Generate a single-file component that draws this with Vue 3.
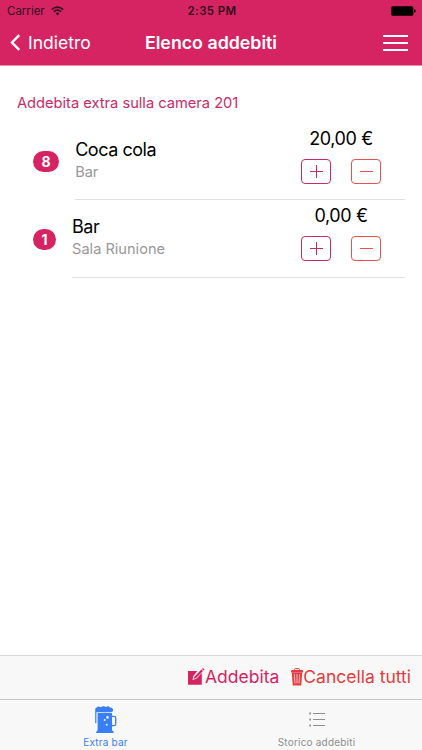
<script setup>
import { ref } from 'vue';

const room = ref(201);

const items = ref([
  { qty: 8, name: 'Coca cola', place: 'Bar', price: '20,00 €' },
  { qty: 1, name: 'Bar', place: 'Sala Riunione', price: '0,00 €' },
]);

const tab = ref('extra');

const add = (item) => {
  item.qty++;
};

const remove = (item) => {
  if (item.qty > 0) {
    item.qty--;
  }
};
</script>

<template>
  <div class="screen">
    <header>
      <div class="status">
        <div class="carrier">
          <span>Carrier</span>
          <svg width="13" height="10" viewBox="0 0 13 10" fill="none" stroke="#30101c" stroke-width="1.6">
            <path d="M0.8 3.7Q6.5 -1.5 12.2 3.7" />
            <path d="M2.9 5.8Q6.5 2.5 10.1 5.8" />
            <path d="M4.6 7.3Q6.5 5.6 8.4 7.3L6.5 9.4Z" fill="#30101c" stroke="none" />
          </svg>
        </div>
        <span class="time">2:35 PM</span>
        <svg class="battery" width="25" height="10" viewBox="0 0 25 10">
          <rect x="0.3" y="0.2" width="22" height="9.6" rx="1.5" />
          <path d="M23.1 3.2Q24.7 3.5 24.7 5T23.1 6.8Z" />
        </svg>
      </div>

      <div class="nav">
        <button class="back">
          <svg width="11" height="17" viewBox="0 0 11 17" fill="none" stroke="#fff" stroke-width="2.4">
            <path d="M9.2 1.2L2 8.5L9.2 15.8" />
          </svg>
          <span>Indietro</span>
        </button>
        <h1>Elenco addebiti</h1>
        <button class="menu">
          <i></i>
          <i></i>
          <i></i>
        </button>
      </div>
    </header>

    <main>
      <p class="heading">Addebita extra sulla camera {{ room }}</p>

      <div class="item" v-for="item in items" :key="item.name">
        <span class="badge">{{ item.qty }}</span>
        <div class="row">
          <div class="info">
            <h2>{{ item.name }}</h2>
            <p>{{ item.place }}</p>
          </div>
          <div class="amount">
            <span class="price">{{ item.price }}</span>
            <div class="buttons">
              <button class="plus" @click="add(item)">
                <svg width="13" height="13" viewBox="0 0 13 13" fill="none" stroke="currentColor">
                  <path d="M0 6.5H13M6.5 0V13" />
                </svg>
              </button>
              <button class="minus" @click="remove(item)">
                <svg width="13" height="13" viewBox="0 0 13 13" fill="none" stroke="currentColor">
                  <path d="M0 6.5H13" />
                </svg>
              </button>
            </div>
          </div>
        </div>
      </div>
    </main>

    <div class="toolbar">
      <button class="charge">
        <svg width="17" height="17" viewBox="0 0 17 17">
          <path d="M0 3H9.2L5.3 8.2L4.5 12L8.4 10.7L13.8 4.8V16.7H0Z" fill="currentColor" />
          <path d="M6.4 8.7L13.4 1.6L15 3.1L8 10L5.7 10.8Z" fill="currentColor" />
          <path d="M14 1L15 0.1L16.6 1.5L15.6 2.5Z" fill="currentColor" />
        </svg>
        <span>Addebita</span>
      </button>
      <button class="clear">
        <svg width="12" height="18" viewBox="0 0 12 18">
          <path d="M3.5 2.2V1.5Q3.5 0.6 4.4 0.6H7.6Q8.5 0.6 8.5 1.5V2.2" fill="none" stroke="currentColor" />
          <path d="M0 3Q0 2 1.2 2H10.8Q12 2 12 3V4.4H0Z" fill="currentColor" />
          <path d="M0.8 4.4H11.2L10.2 17.4H1.8Z" fill="currentColor" />
          <path d="M3.4 6L4 15.5M6 6V15.5M8.6 6L8 15.5" fill="none" stroke="#f8f8f8" stroke-width="0.7" />
        </svg>
        <span>Cancella tutti</span>
      </button>
    </div>

    <nav class="tabs">
      <button :class="{ active: tab === 'extra' }" @click="tab = 'extra'">
        <svg width="22" height="28" viewBox="0 0 22 28">
          <path d="M0.2 17V3.8Q0 2 1.7 1.6Q3.4 -0.2 5.5 1.2Q8.5 -0.8 11 1Q13.5 -0.5 15 1.4Q18 1.3 18.1 4Q18 6.3 15.8 6.3H1.4V17Q0.8 17.8 0.2 17Z" fill="currentColor" />
          <path d="M2.6 6.9H17V24.2L18.6 25.7V27H1.2V25.7L2.6 24.2Z" fill="currentColor" />
          <path d="M17 10.4H19.2Q20.7 10.4 20.7 12V18Q20.7 19.6 19.2 19.6H17" fill="none" stroke="currentColor" stroke-width="1.3" />
          <circle cx="12.5" cy="11.4" r="1.3" fill="#f8f8f8" />
          <circle cx="9.7" cy="14" r="1" fill="#f8f8f8" />
          <circle cx="11.7" cy="18.7" r="1" fill="#f8f8f8" />
        </svg>
        <span>Extra bar</span>
      </button>
      <button :class="{ active: tab === 'history' }" @click="tab = 'history'">
        <svg class="list" width="16" height="28" viewBox="0 0 16 28" fill="none" stroke="currentColor" stroke-width="1.1">
          <path d="M4 7.5H16M4 13.5H16M4 19.5H16" />
          <path d="M0.3 7.5H2M0.3 13.5H2M0.3 19.5H2" stroke-width="1.8" />
        </svg>
        <span>Storico addebiti</span>
      </button>
    </nav>
  </div>
</template>

<style>
body {
  background-color: #fff;
}
</style>

<style scoped>
.screen {
  height: 100vh;
  display: flex;
  flex-direction: column;
  font-family: Inter, "Liberation Sans", sans-serif;
  color: #000;
}

.screen * {
  box-sizing: border-box;
}

h1, h2, p {
  margin: 0;
  font-weight: 400;
}

button {
  padding: 0;
  border: none;
  background: none;
  font-family: inherit;
  color: inherit;
  cursor: pointer;
}

svg {
  display: block;
  flex: none;
}

header {
  height: 66px;
  background-color: #d62463;
  border-bottom: 1px solid #e98aac;
}

.status, .nav {
  display: grid;
  grid-template-columns: 1fr auto 1fr;
  align-items: center;
}

.status {
  height: 22px;
  padding: 0 6px 0 7px;
  font-size: 11.5px;
  color: #30101c;
}

.carrier {
  display: flex;
  align-items: center;
  gap: 6px;
}

.time {
  padding-left: 1px;
  font-weight: 600;
  letter-spacing: 0.35px;
}

.battery {
  justify-self: end;
}

.nav {
  height: 41px;
  padding: 0 14px 0 14px;
  color: #fff;
}

.back {
  margin-left: -4px;
  display: flex;
  align-items: center;
  gap: 7px;
  font-size: 17.5px;
}

.nav h1 {
  font-size: 17.8px;
  font-weight: 600;
}

.menu {
  justify-self: end;
  display: flex;
  flex-direction: column;
  gap: 5px;
}

.menu i {
  width: 25px;
  height: 2px;
  background-color: #fff;
}

main {
  flex: 1;
}

.heading {
  padding: 27px 17px 0;
  font-size: 14.65px;
  line-height: 20px;
  color: #c82a65;
}

.item {
  display: flex;
  padding: 0 17px 0 33px;
}

.item:nth-of-type(1) {
  margin-top: 10px;
}

.badge {
  align-self: center;
  margin-right: 16px;
  padding: 0 8.5px;
  height: 21px;
  border-radius: 10.5px;
  background-color: #d62463;
  color: #fff;
  font-size: 14px;
  font-weight: 700;
  line-height: 21px;
}

.row {
  flex: 1;
  height: 77.4px;
  display: flex;
  justify-content: space-between;
  border-bottom: 1px solid #e0e0e0;
}

.info {
  padding-top: 15.5px;
}

.info h2 {
  font-size: 18px;
  line-height: 22px;
  letter-spacing: -0.45px;
}

.info p {
  margin-top: 1px;
  font-size: 14.6px;
  line-height: 20px;
  color: #98989a;
}

.amount {
  width: 128px;
  display: flex;
  flex-direction: column;
  align-items: center;
}

.price {
  padding-top: 5px;
  font-size: 18px;
  line-height: 22px;
  letter-spacing: -0.4px;
}

.buttons {
  margin-top: 8.5px;
  display: flex;
  gap: 20px;
}

.buttons button {
  width: 30px;
  height: 25px;
  display: flex;
  align-items: center;
  justify-content: center;
  border: 1px solid;
  border-radius: 4px;
}

.plus {
  color: #c82a65;
}

.minus {
  color: #e9504f;
}

.toolbar {
  height: 44px;
  display: flex;
  align-items: center;
  justify-content: flex-end;
  gap: 12px;
  padding: 0 11px 2px 0;
  background-color: #f8f8f8;
  border-top: 1px solid #d8d8d8;
}

.toolbar button {
  display: flex;
  align-items: center;
  font-size: 17.5px;
}

.charge {
  color: #d62463;
}

.clear {
  color: #e53a3e;
}

.tabs {
  height: 51px;
  display: flex;
  background-color: #f8f8f8;
  border-top: 1px solid #c8c8c8;
}

.tabs button {
  flex: 1;
  display: flex;
  flex-direction: column;
  align-items: center;
  padding-top: 6px;
  font-size: 10px;
  line-height: 16px;
  letter-spacing: 0.2px;
  color: #8e8e8e;
}

.tabs .active {
  color: #387ef5;
}
</style>
